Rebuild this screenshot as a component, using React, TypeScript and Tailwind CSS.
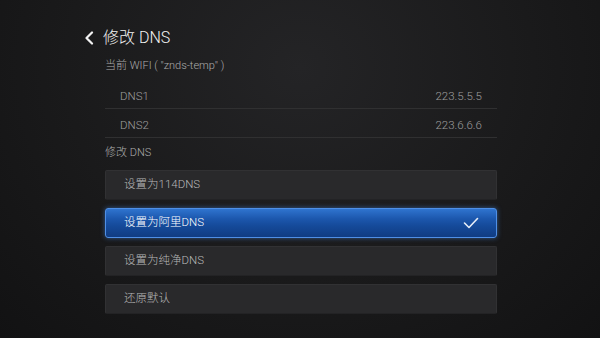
import React from 'react';

const font = { fontFamily: 'Roboto, "Noto Sans CJK SC", sans-serif' };

const dnsRows = [
  { name: 'DNS1', value: '223.5.5.5' },
  { name: 'DNS2', value: '223.6.6.6' },
];

const options = [
  { label: '设置为114DNS', selected: false },
  { label: '设置为阿里DNS', selected: true },
  { label: '设置为纯净DNS', selected: false },
  { label: '还原默认', selected: false },
];

const BackIcon = () => (
  <svg width="10" height="14" viewBox="0 0 10 14" fill="none">
    <polyline points="8,1.5 2.5,7 8,12.5" stroke="#f2f2f2" strokeWidth="2.2" strokeLinecap="round" strokeLinejoin="round" />
  </svg>
);

const CheckIcon = () => (
  <svg width="16" height="12" viewBox="0 0 16 12" fill="none">
    <polyline points="1.5,6 6,10.5 14.5,1.5" stroke="#e8eef8" strokeWidth="1.6" strokeLinecap="round" strokeLinejoin="round" />
  </svg>
);

const OptionButton = ({ label, selected }: { label: string; selected: boolean }) =>
  selected ? (
    <div className="h-[30px] flex items-center justify-between pl-[18px] pr-[17px] rounded-[3px] border border-[#4f8fe6] bg-[linear-gradient(to_bottom,#2f74cf_0%,#1c57ad_35%,#154a9a_60%,#103c82_100%)] shadow-[0_0_5px_rgba(70,140,235,0.55)]">
      <span className="text-[11.5px] font-light text-white">{label}</span>
      <CheckIcon />
    </div>
  ) : (
    <div className="h-[30px] flex items-center pl-[18px] rounded-[2px] bg-[#29292b] border border-[#313133] border-b-[#232325]">
      <span className="text-[11.5px] font-light text-[#b8b8b8]">{label}</span>
    </div>
  );

export default function App() {
  return (
    <div
      className="w-[600px] h-[338px] overflow-hidden bg-[radial-gradient(ellipse_at_50%_20%,#242426_0%,#1a1a1b_55%,#121213_100%)]"
      style={font}
    >
      <div className="pl-[84px] pt-[28px]">
        <div className="h-[20px] flex items-center gap-[9px]">
          <BackIcon />
          <span className="text-[16px] font-light text-[#f2f2f2] leading-none">修改 DNS</span>
        </div>
      </div>

      <div className="ml-[105px] w-[392px]">
        <div className="mt-[10px] h-[16px] flex items-center text-[11px] font-light text-[#acacac]">
          当前 WIFI ( "znds-temp" )
        </div>

        <div className="mt-[6px]">
          {dnsRows.map((row) => (
            <div
              key={row.name}
              className="h-[29px] box-border border-b border-[#303031] pt-[6px] px-[15px] flex items-center justify-between text-[11.5px] font-light text-[#9e9e9e]"
            >
              <span>{row.name}</span>
              <span>{row.value}</span>
            </div>
          ))}
        </div>

        <div className="mt-[7px] h-[16px] flex items-center text-[11px] font-light text-[#acacac]">修改 DNS</div>

        <div className="mt-[9px] flex flex-col gap-[8px]">
          {options.map((opt) => (
            <OptionButton key={opt.label} label={opt.label} selected={opt.selected} />
          ))}
        </div>
      </div>
    </div>
  );
}
